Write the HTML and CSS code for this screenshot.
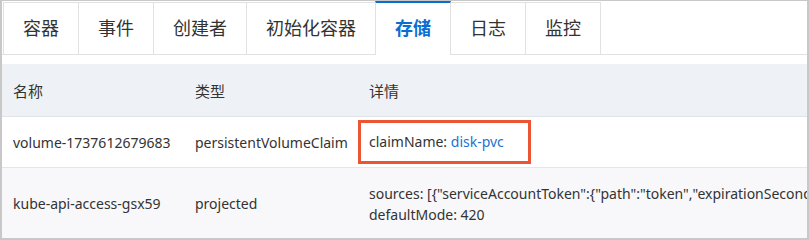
FILE: index.html
```html
<!DOCTYPE html>
<html lang="zh-CN">
<head>
  <meta charset="UTF-8" />
  <title>存储</title>
  <link rel="stylesheet" href="styles.css">
</head>
<body>
  <div class="frame">
    <div class="tabs">
      <div class="tab">容器</div>
      <div class="tab">事件</div>
      <div class="tab">创建者</div>
      <div class="tab">初始化容器</div>
      <div class="tab active">存储</div>
      <div class="tab">日志</div>
      <div class="tab">监控</div>
    </div>

    <table class="volumes">
      <colgroup>
        <col class="col-name">
        <col class="col-type">
        <col>
      </colgroup>
      <thead>
        <tr>
          <th>名称</th>
          <th>类型</th>
          <th>详情</th>
        </tr>
      </thead>
      <tbody>
        <tr class="row-pvc">
          <td>volume-1737612679683</td>
          <td>persistentVolumeClaim</td>
          <td class="detail-marked">
            <div class="mark">claimName: <a href="#">disk-pvc</a></div>
          </td>
        </tr>
        <tr class="row-projected">
          <td>kube-api-access-gsx59</td>
          <td>projected</td>
          <td class="detail">
            <div class="detail-line">sources: [{"serviceAccountToken":{"path":"token","expirationSeconds":3607}}]</div>
            <div>defaultMode: 420</div>
          </td>
        </tr>
      </tbody>
    </table>
  </div>
</body>
</html>
```

FILE: styles.css
```css
body {
  margin: 0;
  background: #fff;
  font-family: "Noto Sans", "Noto Sans CJK SC", sans-serif;
  color: #333;
}

.frame {
  width: 809px;
  height: 240px;
  box-sizing: border-box;
  border: 2px solid #c8c8c8;
  border-top-width: 1px;
  overflow: hidden;
}

.tabs {
  display: flex;
  margin-top: 1px;
  padding-left: 1px;
  border-bottom: 1px solid #e1e1e1;
}

.tab {
  padding: 0 19px;
  height: 51px;
  line-height: 50px;
  font-size: 18px;
  border: 1px solid #e1e1e1;
  border-bottom: none;
  margin-right: -1px;
  margin-bottom: -1px;
  background: #fff;
  color: #333;
}

.tab.active {
  position: relative;
  z-index: 1;
  border-top: 2px solid #0a6ed1;
  margin-top: -1px;
  height: 52px;
  font-weight: bold;
  color: #0a6ed1;
}

.volumes {
  margin-top: 9px;
  width: 100%;
  border-collapse: collapse;
  table-layout: fixed;
  font-size: 14px;
  white-space: nowrap;
}

.col-name { width: 182px; }
.col-type { width: 174px; }

.volumes th {
  height: 52px;
  padding: 0 11px;
  text-align: left;
  font-weight: normal;
  font-size: 15px;
  background: #eef1f6;
  border-bottom: 1px solid #dfe3ea;
}

.volumes td {
  padding: 0 11px;
  vertical-align: middle;
}

.row-pvc td {
  height: 50px;
  border-bottom: 1px solid #e3e6ec;
}

.row-projected td {
  height: 71px;
  background: #f8f8fa;
}

.detail {
  line-height: 21px;
  padding-top: 12px;
}

.detail-line {
  width: 440px;
  overflow: hidden;
}

.volumes td.detail-marked {
  padding: 0;
}

.mark {
  width: 173px;
  height: 44px;
  box-sizing: border-box;
  border: 3px solid #ec5533;
  padding-left: 8px;
  line-height: 38px;
}

.mark a {
  color: #1a73d0;
  text-decoration: none;
}
```
